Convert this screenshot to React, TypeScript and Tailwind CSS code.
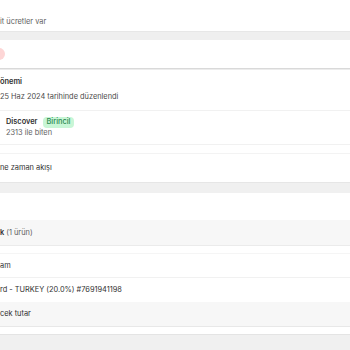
export default function App() {
  const line = (c: string) => <div className={`h-px w-full shrink-0 ${c}`} />;
  return (
    <div
      className="w-[350px] h-[350px] overflow-hidden bg-[#f1f1f1] flex flex-col text-[7.4px] leading-[10px] text-[#303030]"
      style={{ fontFamily: "Inter, 'Noto Sans', sans-serif" }}
    >
      <div className="h-[31px] shrink-0 bg-white pt-[17px] text-[#616161]">it ücretler var</div>
      <div className="h-[9px] shrink-0 bg-[#efefef] border-t border-[#e7e7e7]" />
      <div className="h-[28px] shrink-0 bg-white flex items-center">
        <div className="w-[12px] h-[12px] rounded-full bg-[#fdd6d6] ml-[-7px]" />
      </div>
      {line("bg-[#d9d9d9]")}
      {line("bg-[#ececec]")}
      <div className="h-[40px] shrink-0 bg-white pt-[7px] flex flex-col gap-[5px]">
        <div className="font-semibold">önemi</div>
        <div className="text-[#4a4a4a]">25 Haz 2024 tarihinde düzenlendi</div>
      </div>
      {line("bg-[#f1f1f1]")}
      <div className="h-[33px] shrink-0 bg-white pt-[6px] pl-[6px] flex flex-col">
        <div className="flex items-center gap-[5px] h-[10px]">
          <span className="font-semibold">Discover</span>
          <span className="h-[11px] px-[4px] rounded-[4px] bg-[#c8f6d6] text-[#2c8a52] flex items-center font-medium">
            Birincil
          </span>
        </div>
        <div className="text-[#616161] mt-px">2313 ile biten</div>
      </div>
      {line("bg-[#f1f1f1]")}
      <div className="h-[8px] shrink-0 bg-white" />
      {line("bg-[#f3f3f3]")}
      <div className="h-[28px] shrink-0 bg-white flex items-center">ne zaman akışı</div>
      <div className="h-[11px] shrink-0 bg-[#f0f0f0] border-t border-[#e6e6e6]" />
      <div className="h-[27px] shrink-0 bg-white" />
      <div className="h-[25px] shrink-0 bg-[#f7f7f7] flex items-center">
        <span className="font-semibold">k</span>
        <span className="text-[#616161] ml-[2px]">(1 ürün)</span>
      </div>
      {line("bg-[#ebebeb]")}
      <div className="h-[7px] shrink-0 bg-white" />
      {line("bg-[#f5f5f5]")}
      <div className="h-[23px] shrink-0 bg-white flex items-center">am</div>
      {line("bg-[#f1f1f1]")}
      <div className="h-[24px] shrink-0 bg-white flex items-center">rd - TURKEY (20.0%) #7691941198</div>
      <div className="h-[24px] shrink-0 bg-[#f7f7f7] flex items-center">cek tutar</div>
      {line("bg-[#e8e8e8]")}
      <div className="h-[7px] shrink-0 bg-white" />
      <div className="flex-1 bg-[#f0f0f0] border-t border-[#e4e4e4]" />
    </div>
  );
}
